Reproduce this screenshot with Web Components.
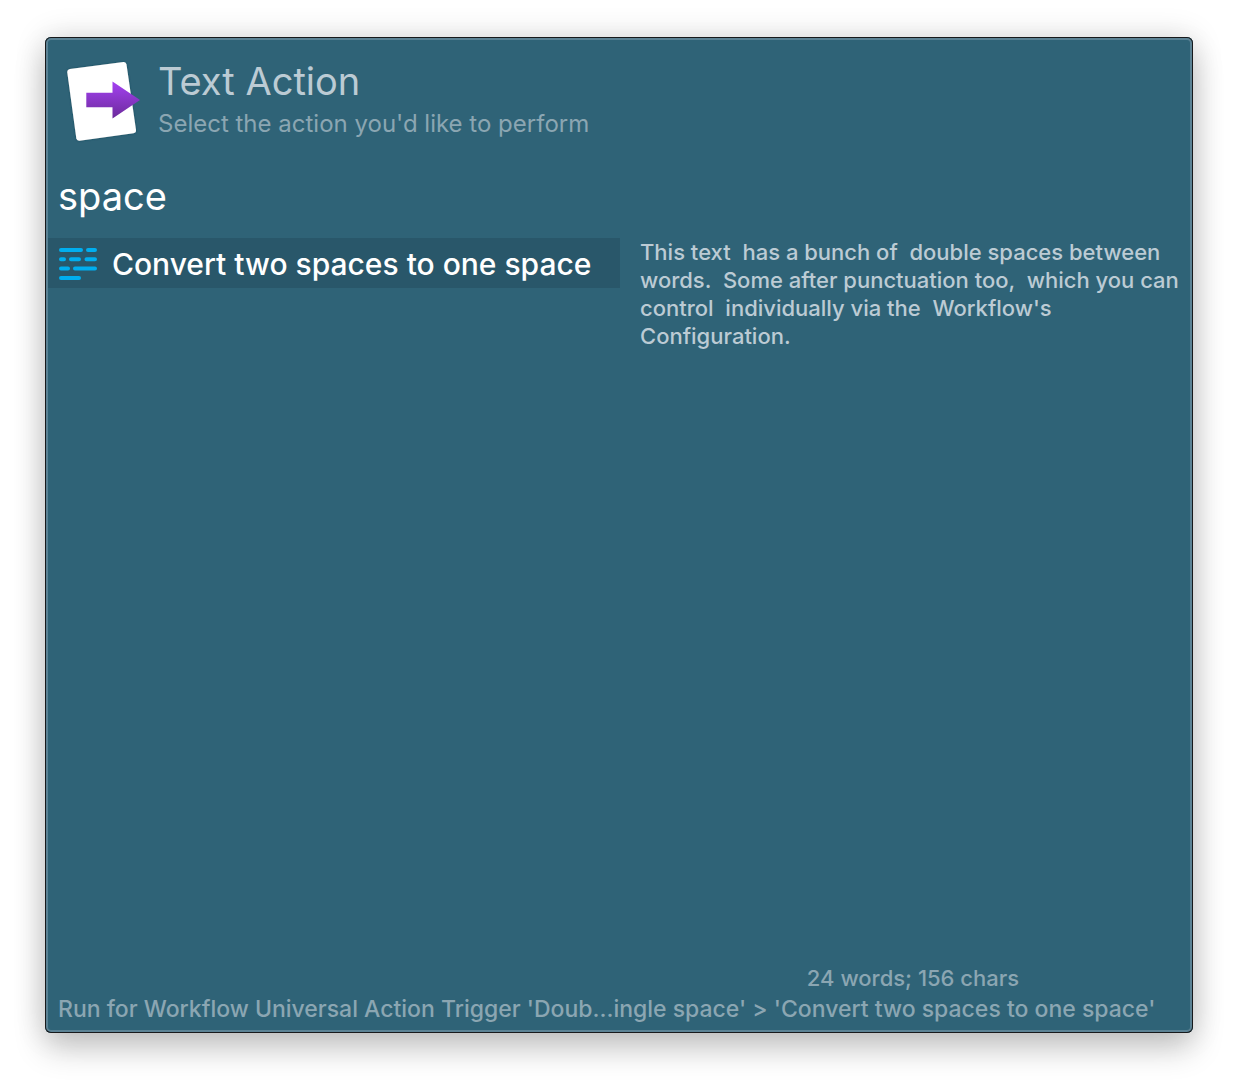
<!DOCTYPE html>
<html lang="en">
<head>
<meta charset="utf-8">
<title>Text Action</title>
<style>
  html { background: #fff; }
  body {
    margin: 0;
    min-height: 100vh;
    box-sizing: border-box;
    padding: 37px 45px 53px;
    display: flex;
    font-family: Inter, "Liberation Sans", sans-serif;
    color: #fff;
    --panel: #2f6377;
    --selected: #29576a;
    --strong: #bccbd4;
    --muted: #8ba6b2;
    --edge: #5b8294;
  }
</style>
</head>
<body>
<action-window>
  <action-header slot="header" heading="Text Action" subtitle="Select the action you'd like to perform"></action-header>
  <action-search slot="search" value="space"></action-search>
  <action-result slot="results">Convert two spaces to one space</action-result>
  <text-preview slot="preview" count="24 words; 156 chars">This text  has a bunch of  double spaces between words.  Some after punctuation too,  which you can control  individually via the  Workflow's Configuration.</text-preview>
  <status-line slot="status">Run for Workflow Universal Action Trigger 'Doub...ingle space' &gt; 'Convert two spaces to one space'</status-line>
</action-window>

<script>
const define = (name, markup, setup) => {
  const template = document.createElement('template');
  template.innerHTML = markup;
  customElements.define(name, class extends HTMLElement {
    constructor() {
      super();
      this.attachShadow({ mode: 'open' }).append(template.content.cloneNode(true));
    }
    connectedCallback() {
      if (setup) setup(this, this.shadowRoot);
    }
  });
};

define('action-window', `
  <style>
    :host {
      flex: 1; min-width: 0; box-sizing: border-box;
      display: flex; flex-direction: column;
      padding: 3px;
      border-radius: 6px;
      background: var(--panel);
      box-shadow: inset 0 0 0 1px #17191b, inset 0 0 0 3px var(--edge),
        0 16px 32px rgba(0,0,0,.2), 0 0 32px rgba(0,0,0,.14);
    }
    main { flex: 1; display: grid; grid-template-columns: 572px minmax(0, 1fr); }
  </style>
  <slot name="header"></slot>
  <slot name="search"></slot>
  <main>
    <div><slot name="results"></slot></div>
    <slot name="preview"></slot>
  </main>
  <slot name="status"></slot>
`);

define('action-header', `
  <style>
    :host { display: flex; align-items: flex-start; gap: 12px; padding: 16px 12px 0; }
    svg { width: 86px; height: 94px; flex: none; display: block; }
    hgroup { margin: 0; }
    h1 { margin: 0; font-size: 38px; line-height: 50px; font-weight: 400; color: var(--strong); }
    p { margin: 0; font-size: 24px; line-height: 36px; color: var(--muted); }
  </style>
  <svg viewBox="60 56 86 94" aria-hidden="true">
    <defs>
      <linearGradient id="arrow" x1="0" y1="0" x2="0" y2="1">
        <stop offset="0" stop-color="#a441f2"/><stop offset="1" stop-color="#6c2b9b"/>
      </linearGradient>
      <filter id="soft" x="-20%" y="-20%" width="140%" height="140%">
        <feDropShadow dx="0" dy="0" stdDeviation="1" flood-color="#173f52" flood-opacity=".7"/>
      </filter>
    </defs>
    <path filter="url(#soft)" fill="#fff" d="M70 69 L123.500 62 Q126 61.700 126.500 64.500 L136 130 Q136.300 132.700 133.500 133.200 L79.500 140.700 Q76.800 141 76.300 138.300 L67.300 72.500 Q67 69.500 70 69Z"/>
    <path fill="url(#arrow)" d="M86.300 92.800H112.500V81.500L140 100L112.500 118.500V107.300H86.300Z"/>
  </svg>
  <hgroup><h1></h1><p></p></hgroup>
`, (el, root) => {
  root.querySelector('h1').textContent = el.getAttribute('heading');
  root.querySelector('p').textContent = el.getAttribute('subtitle');
});

define('action-search', `
  <style>
    :host { display: block; padding: 19px 10px 15px; }
    input {
      display: block; box-sizing: border-box; width: 100%; height: 54px;
      margin: 0; padding: 0; border: 0; outline: 0; background: none;
      font: inherit; font-size: 38px; color: #fff;
    }
  </style>
  <input type="text" aria-label="Filter actions" spellcheck="false">
`, (el, root) => {
  root.querySelector('input').value = el.getAttribute('value');
});

define('action-result', `
  <style>
    :host { display: block; }
    button {
      display: flex; align-items: center; gap: 14px;
      width: 100%; height: 50px; margin: 0; padding: 2px 10px 0; border: 0;
      background: var(--selected);
      font: inherit; font-size: 30px; font-weight: 500; color: #fff; text-align: left; white-space: nowrap;
    }
    svg { width: 40px; height: 34px; flex: none; }
  </style>
  <button type="button">
    <svg viewBox="58 247 40 34" aria-hidden="true" fill="none" stroke="#00aeef" stroke-width="4" stroke-linecap="round">
      <path d="M61 250H81M88 250H95M61 259.200H64M71 259.200H79M86.500 259.200H95M61 268.500H68M75 268.500H95M61 278H79"/>
    </svg>
    <span><slot></slot></span>
  </button>
`);

define('text-preview', `
  <style>
    :host { display: flex; flex-direction: column; justify-content: space-between; }
    p {
      margin: 0; padding: 0 10px 0 20px;
      font-size: 22px; font-weight: 450; line-height: 28px; color: var(--strong); white-space: pre-wrap;
    }
    output { display: block; padding-left: 16px; text-align: center; font-size: 22px; font-weight: 450; line-height: 28px; color: var(--muted); }
  </style>
  <p><slot></slot></p>
  <output></output>
`, (el, root) => {
  root.querySelector('output').textContent = el.getAttribute('count');
});

define('status-line', `
  <style>
    :host { display: block; padding: 0 10px 4px; font-size: 23px; font-weight: 500; line-height: 34px; color: var(--muted); white-space: nowrap; }
  </style>
  <slot></slot>
`);
</script>
</body>
</html>
